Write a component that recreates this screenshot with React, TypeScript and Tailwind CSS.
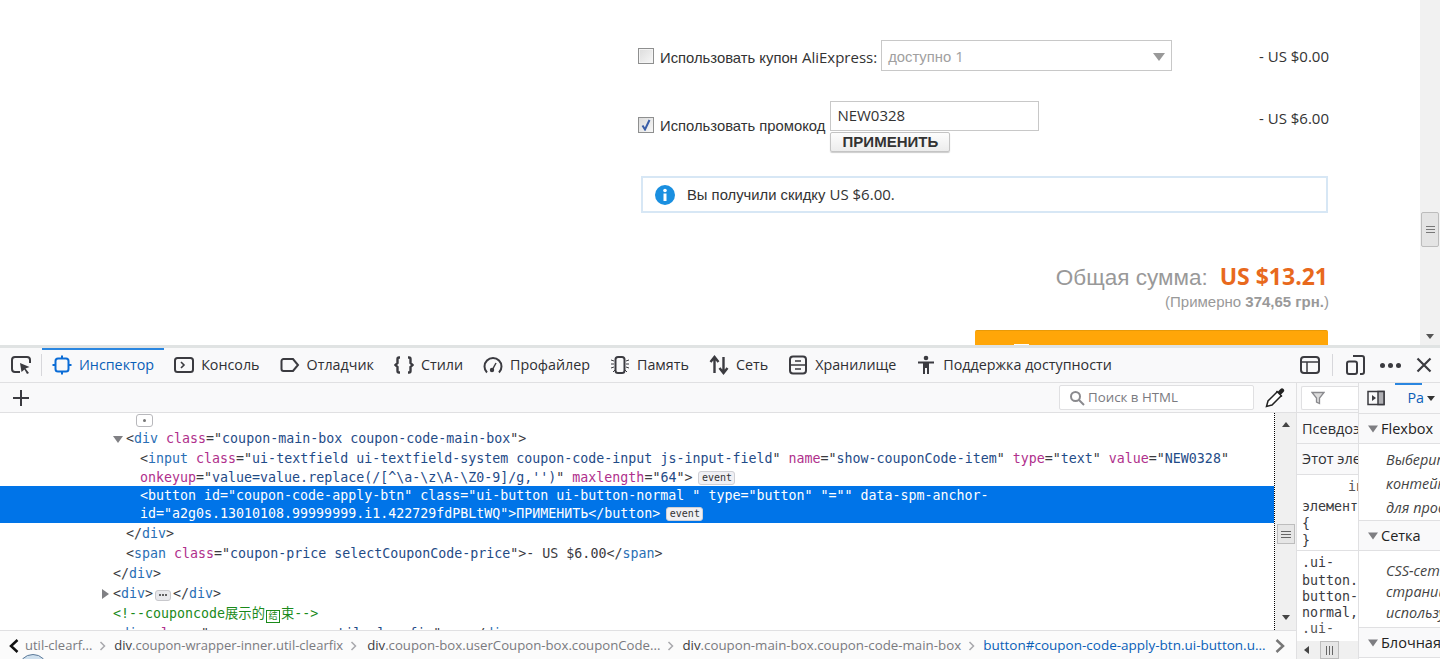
import React from "react";

const Tag = ({ c }: { c: string }) => <span className="text-[#2a6fb5]">{c}</span>;
const An = ({ c }: { c: string }) => <span className="text-[#b0308c]">{c}</span>;
const Val = ({ c }: { c: string }) => <span className="text-[#1f4b87]">{c}</span>;
const Lat = ({ children }: { children: React.ReactNode }) => (
  <span className="font-['Open_Sans',sans-serif] text-[15px]">{children}</span>
);
const Attr = ({ n, v }: { n: string; v: string }) => (
  <>
    {" "}
    <An c={n} />
    ="<Val c={v} />"
  </>
);
const EventBadge = () => (
  <span className="ml-[6px] inline-flex h-[14px] w-[37px] items-center justify-center rounded-[3px] border border-[#cfcfd4] bg-[#f0f0f4] align-[1px] text-[10px] leading-none text-[#333]">
    event
  </span>
);
const Dots = () => (
  <span className="mx-[2px] inline-flex h-[11px] w-[16px] items-center justify-center gap-[1px] rounded-[3px] border border-[#c8c8cc] bg-[#e8e8ec] align-[2px]">
    <i className="h-[2px] w-[2px] rounded-full bg-[#333]" />
    <i className="h-[2px] w-[2px] rounded-full bg-[#333]" />
    <i className="h-[2px] w-[2px] rounded-full bg-[#333]" />
  </span>
);

const ic = "shrink-0 fill-none stroke-[#3b3b40] stroke-[2]";

const tabs: { label: string; icon: React.ReactNode; active?: boolean }[] = [
  {
    label: "Инспектор",
    active: true,
    icon: (
      <svg width="20" height="20" viewBox="0 0 20 20" className="shrink-0 fill-none stroke-[#0a6cd6] stroke-[2]">
        <rect x="3.500" y="3.500" width="13" height="13" rx="2.500" />
        <path d="M10 0.500V3.500M10 16.500V19.500M0.500 10H3.500M16.500 10H19.500" />
      </svg>
    ),
  },
  {
    label: "Консоль",
    icon: (
      <svg width="20" height="20" viewBox="0 0 20 20" className={ic}>
        <rect x="1" y="3" width="18" height="14" rx="2.500" />
        <path d="M7 7l3 3-3 3" strokeWidth="1.600" />
      </svg>
    ),
  },
  {
    label: "Отладчик",
    icon: (
      <svg width="20" height="20" viewBox="0 0 20 20" className={ic}>
        <path d="M3.500 4H13l5 6-5 6H3.500A2 2 0 0 1 1.500 14V6a2 2 0 0 1 2-2z" />
      </svg>
    ),
  },
  {
    label: "Стили",
    icon: (
      <svg width="20" height="20" viewBox="0 0 20 20" className="shrink-0 fill-none stroke-[#3b3b40] stroke-[2.400]">
        <path d="M6 2.500H5a1.500 1.500 0 0 0-1.500 1.500v4L1.500 10l2 2v4A1.500 1.500 0 0 0 5 17.500h1M14 2.500h1A1.500 1.500 0 0 1 16.500 4v4l2 2-2 2v4a1.500 1.500 0 0 1-1.500 1.500h-1" />
      </svg>
    ),
  },
  {
    label: "Профайлер",
    icon: (
      <svg width="20" height="20" viewBox="0 0 20 20" className={ic}>
        <path d="M4 17.500A8.500 8.500 0 1 1 16 17.500" />
        <circle cx="9" cy="15" r="2.200" fill="#3b3b40" stroke="none" />
        <path d="M9.500 14.500L13 8" strokeWidth="1.500" />
      </svg>
    ),
  },
  {
    label: "Память",
    icon: (
      <svg width="20" height="20" viewBox="0 0 20 20" className={ic}>
        <rect x="5.500" y="2" width="9" height="16" rx="2.500" />
        <path d="M1 5l3 1M1 9h3M1 13l3-1M3 17l2-2M19 5l-3 1M19 9h-3M19 13l-3-1M17 17l-2-2" strokeWidth="1" />
      </svg>
    ),
  },
  {
    label: "Сеть",
    icon: (
      <svg width="20" height="20" viewBox="0 0 20 20" className={ic}>
        <path d="M5.500 18V2M1.500 7l4-5 4 5M14.500 2v16M10.500 13l4 5 4-5" strokeWidth="2.400" />
      </svg>
    ),
  },
  {
    label: "Хранилище",
    icon: (
      <svg width="20" height="20" viewBox="0 0 20 20" className={ic}>
        <rect x="2" y="1.500" width="16" height="17" rx="3" />
        <path d="M2 10h16M7 6h6M7 14h6" strokeWidth="1.700" />
      </svg>
    ),
  },
  {
    label: "Поддержка доступности",
    icon: (
      <svg width="20" height="20" viewBox="0 0 20 20" className="shrink-0 fill-[#3b3b40]">
        <circle cx="10" cy="3" r="2.300" />
        <path d="M2 6.500h16v2h-5v10.500h-2v-6h-2v6H7V8.500H2z" />
      </svg>
    ),
  },
];

const Tab = ({ t }: { t: (typeof tabs)[number] }) => (
  <div
    className={
      "relative flex h-full items-center gap-[7px] px-[10px] " +
      (t.active ? "text-[#0a5fb8]" : "text-[#2f2f33]")
    }
  >
    {t.active && <span className="absolute inset-x-0 top-0 h-[2px] bg-[#2a86e0]" />}
    {t.icon}
    <span>{t.label}</span>
  </div>
);

const Crumb = ({ a, b, blue, s }: { a: string; b: string; blue?: boolean; s?: string }) => (
  <span className={"whitespace-nowrap " + (blue ? "text-[#0a5fb8] " : "text-[#3a3a3e] ") + (s ?? "")}>
    {a}
    <span className={blue ? "text-[#0a5fb8]" : "text-[#7a7a7f]"}>{b}</span>
  </span>
);
const Sep = () => (
  <svg width="8" height="10" viewBox="0 0 8 10" className="mx-[7px] shrink-0 fill-none stroke-[#a8a8ac] stroke-[1.500]">
    <path d="M1.500 1l4 4-4 4" />
  </svg>
);

const Tri = () => (
  <svg width="12" height="8" viewBox="0 0 12 8" className="shrink-0 fill-[#7e7e82]">
    <path d="M1 0.500h10L6 7.500z" />
  </svg>
);

const SideHead = ({ label, h }: { label: string; h: string }) => (
  <div className={"flex items-center gap-[2px] border-y border-[#e0e0e2] bg-[#f9f9fa] pl-[8px] text-[14.500px] text-[#222] " + h}>
    <Tri />
    <span className="whitespace-nowrap">{label}</span>
  </div>
);

export default function App() {
  return (
    <div className="relative flex h-[659px] w-[1440px] flex-col overflow-hidden bg-white font-['Open_Sans','Noto_Sans_CJK_SC',sans-serif]">
      {/* page */}
      <div className="flex h-[345px] shrink-0 overflow-hidden">
        <div className="flex-1 pl-[638px] pr-[91px] pt-[40px] font-['Liberation_Sans',sans-serif] text-[14.800px] text-[#333]">
          <div className="flex h-[31px] items-center">
            <span className="h-[16px] w-[16px] shrink-0 border border-[#8e8f8f] bg-gradient-to-br from-[#dcdcdc] to-[#f7f7f7] ring-1 ring-inset ring-[#f4f4f4]" />
            <span className="ml-[6px] whitespace-nowrap pt-[4px]">
              Использовать купон <Lat>AliExpress:</Lat>
            </span>
            <div className="ml-[4px] flex h-[31px] w-[291px] items-center justify-between border border-[#c8c8c8] px-[6px] pt-[2px] text-[#a0a0a0]">
              <span>доступно <Lat>1</Lat></span>
              <span className="h-0 w-0 border-x-[6px] border-t-[8px] border-x-transparent border-t-[#999]" />
            </div>
            <span className="ml-auto whitespace-nowrap pt-[3px]"><Lat>- US $0.00</Lat></span>
          </div>

          <div className="mt-[30px] flex h-[51px] items-start">
            <span className="mt-[16px] flex h-[16px] w-[16px] shrink-0 items-center justify-center border border-[#8e8f8f] bg-gradient-to-br from-[#dcdcdc] to-[#f7f7f7]">
              <svg width="10" height="12" viewBox="0 0 10 12" className="fill-none stroke-[#3a5ea8] stroke-[2]">
                <path d="M1.500 6.500L4 10.500 8.500 1" />
              </svg>
            </span>
            <span className="ml-[6px] mt-[14px] whitespace-nowrap">Использовать промокод</span>
            <div className="ml-[5px] flex flex-col items-start">
              <div className="flex h-[30px] w-[209px] items-center border border-[#c8c8c8] pb-[2px] pl-[6px] text-[#333]"><Lat>NEW0328</Lat></div>
              <div className="mt-[1px] flex h-[20px] w-[120px] items-center justify-center rounded-[2px] border border-[#c4c4c4] bg-gradient-to-b from-[#fdfdfd] to-[#ececec] text-[15px] font-bold text-[#333] shadow-[0_1px_1px_rgba(0,0,0,0.2)]">
                ПРИМЕНИТЬ
              </div>
            </div>
            <span className="ml-auto mt-[6px] whitespace-nowrap"><Lat>- US $6.00</Lat></span>
          </div>

          <div className="ml-[3px] mr-[1px] mt-[24px] flex h-[37px] items-center border-2 border-[#d7e7f5] pl-[12px]">
            <svg width="20" height="20" viewBox="0 0 20 20" className="shrink-0">
              <circle cx="10" cy="10" r="10" fill="#1a8fe0" />
              <rect x="8.500" y="8.500" width="3" height="7.500" fill="#fff" />
              <circle cx="10" cy="5.500" r="1.800" fill="#fff" />
            </svg>
            <span className="ml-[12px] whitespace-nowrap">Вы получили скидку <Lat>US $6.00.</Lat></span>
          </div>

          <div className="mr-[1px] mt-[46px] flex items-baseline justify-end text-[22.500px] leading-[34px]">
            <span className="text-[#999]">Общая сумма:</span>
            <span className="ml-[12px] font-['Open_Sans',sans-serif] text-[23px] font-bold text-[#e8691d]">US $13.21</span>
          </div>
          <div className="text-right text-[15px] leading-[14px] text-[#999]">
            (Примерно <span className="font-bold">374,65 грн.</span>)
          </div>
          <div className="ml-[337px] mr-[1px] mt-[21px] flex h-[30px] justify-center rounded-t-[2px] border-t border-[#e89a08] bg-[#ffa608] pr-[261px] pt-[13px]">
            <span className="h-[4px] w-[15px] bg-white" />
          </div>
        </div>
        <div className="flex w-[20px] shrink-0 flex-col bg-[#f1f1f1]">
          <div className="ml-[1px] mt-[212px] flex h-[35px] w-[18px] flex-col items-center justify-center gap-[2px] rounded-[2px] border border-[#bcbcbc] bg-[#e4e4e4]">
            <i className="h-px w-[9px] bg-[#777]" />
            <i className="h-px w-[9px] bg-[#777]" />
            <i className="h-px w-[9px] bg-[#777]" />
          </div>
          <div className="mx-auto mt-[87px] h-0 w-0 border-x-[4px] border-t-[5px] border-x-transparent border-t-[#555]" />
        </div>
      </div>

      {/* devtools */}
      <div className="flex min-h-0 flex-1 flex-col border-t-[3px] border-[#e0e3e3] bg-[#f9f9fa] text-[14.300px] text-[#2f2f33]">
        <div className="flex h-[35px] shrink-0 items-center border-b border-[#e0e0e2]">
          <div className="flex h-full w-[41px] shrink-0 items-center justify-center">
            <svg width="20" height="20" viewBox="0 0 20 20" className="fill-none stroke-[#3b3b40] stroke-[2]">
              <path d="M9 17H4a3 3 0 0 1-3-3V5a3 3 0 0 1 3-3h12a3 3 0 0 1 3 3v3" />
              <path d="M9 8l9.500 4-4 1.500 3.500 4.500-2 1-2.500-4.500-3 2.500z" fill="#3b3b40" stroke="none" />
            </svg>
          </div>
          <div className="h-[22px] w-px shrink-0 bg-[#d7d7db]" />
          <div className="flex h-full min-w-0 flex-1 items-center">
            {tabs.map((t) => (
              <Tab key={t.label} t={t} />
            ))}
          </div>
          <svg width="20" height="20" viewBox="0 0 20 20" className="mr-[12px] shrink-0 fill-none stroke-[#3b3b40] stroke-[2]">
            <rect x="1" y="2" width="18" height="16" rx="3" />
            <path d="M1 7h18M7 7v11" strokeWidth="1.500" />
          </svg>
          <div className="h-[22px] w-px shrink-0 bg-[#d7d7db]" />
          <svg width="20" height="20" viewBox="0 0 20 20" className="ml-[13px] shrink-0 fill-none stroke-[#3b3b40] stroke-[2]">
            <path d="M7 1h9a2 2 0 0 1 2 2v14a2 2 0 0 1-2 2h-2" />
            <rect x="1" y="6.500" width="10" height="12.500" rx="2" />
          </svg>
          <div className="ml-[14px] flex shrink-0 gap-[3px]">
            <i className="h-[5px] w-[5px] rounded-full bg-[#3b3b40]" />
            <i className="h-[5px] w-[5px] rounded-full bg-[#3b3b40]" />
            <i className="h-[5px] w-[5px] rounded-full bg-[#3b3b40]" />
          </div>
          <svg width="16" height="16" viewBox="0 0 16 16" className="ml-[15px] mr-[8px] shrink-0 fill-none stroke-[#3b3b40] stroke-[2.200]">
            <path d="M1.500 1.500l13 13M14.500 1.500l-13 13" />
          </svg>
        </div>

        <div className="flex min-h-0 flex-1">
          {/* markup panel */}
          <div className="flex w-[1296px] shrink-0 flex-col">
            <div className="flex h-[30px] shrink-0 items-center border-b border-[#e0e0e2] pl-[12px]">
              <svg width="18" height="18" viewBox="0 0 18 18" className="shrink-0 fill-none stroke-[#3b3b40] stroke-[2]">
                <path d="M9 1v16M1 9h16" />
              </svg>
              <div className="ml-[1029px] flex h-[25px] w-[195px] shrink-0 items-center gap-[3px] rounded-[2px] border border-[#e0e0e2] bg-white pl-[9px] pt-[1px] text-[13.300px] text-[#7a7a7f]">
                <svg width="16" height="16" viewBox="0 0 16 16" className="shrink-0 fill-none stroke-[#8a8a8e] stroke-[2]">
                  <circle cx="6.500" cy="6.500" r="4.500" />
                  <path d="M10 10l5 5" />
                </svg>
                <span>Поиск в HTML</span>
              </div>
              <svg width="20" height="20" viewBox="0 0 20 20" className="ml-[11px] shrink-0">
                <path d="M12.500 3.500L3 13l-1.500 5.500L7 17l9.500-9.500" fill="#fff" stroke="#222" strokeWidth="1.500" />
                <path d="M11 3.500l5.500 5.500 1-1-1.500-1.500 2.500-2.500a2 2 0 0 0-3-3L13 3.500 12 2.500z" fill="#222" />
              </svg>
            </div>
            <div className="flex min-h-0 flex-1">
              <div className="min-w-0 flex-1 overflow-hidden border-r border-dotted border-black bg-white font-['DejaVu_Sans_Mono','Noto_Sans_CJK_SC',monospace] text-[13.300px] leading-[18px] text-[#3a3a3e]">
                <div className="ml-[136px] mt-[1px] flex h-[13px] w-[17px] items-center justify-center rounded-[3px] border border-[#b8b8bc] bg-white">
                  <i className="h-[3px] w-[3px] rounded-full bg-[#777]" />
                </div>
                <div className="relative ml-[126px] mt-[3px] h-[19px] whitespace-nowrap">
                  <span className="absolute left-[-13px] top-[6px] h-0 w-0 border-x-[5px] border-t-[7px] border-x-transparent border-t-[#808084]" />
                  &lt;<Tag c="div" />
                  <Attr n="class" v="coupon-main-box coupon-code-main-box" />
                  &gt;
                </div>
                <div className="ml-[140px] h-[37px] whitespace-nowrap leading-[19px]">
                  &lt;<Tag c="input" />
                  <Attr n="class" v="ui-textfield ui-textfield-system coupon-code-input js-input-field" />
                  <Attr n="name" v="show-couponCode-item" />
                  <Attr n="type" v="text" />
                  <Attr n="value" v="NEW0328" />
                  <br />
                  <An c="onkeyup" />
                  ="<Val c="value=value.replace(/[^\a-\z\A-\Z0-9]/g,'')" />"
                  <Attr n="maxlength" v="64" />
                  &gt;
                  <EventBadge />
                </div>
                <div className="flex h-[37px] items-center whitespace-nowrap bg-[#0074e8] pl-[140px] leading-[18px] text-white">
                  <div>
                    &lt;button id="coupon-code-apply-btn" class="ui-button ui-button-normal " type="button" "="" data-spm-anchor-
                    <br />
                    id="a2g0s.13010108.99999999.i1.422729fdPBLtWQ"&gt;ПРИМЕНИТЬ&lt;/button&gt;
                    <EventBadge />
                  </div>
                </div>
                <div className="ml-[126px] mt-[2px] h-[20px] whitespace-nowrap">
                  &lt;/<Tag c="div" />&gt;
                </div>
                <div className="ml-[126px] h-[20px] whitespace-nowrap">
                  &lt;<Tag c="span" />
                  <Attr n="class" v="coupon-price selectCouponCode-price" />
                  &gt;- US $6.00&lt;/<Tag c="span" />&gt;
                </div>
                <div className="ml-[113px] h-[20px] whitespace-nowrap">
                  &lt;/<Tag c="div" />&gt;
                </div>
                <div className="relative ml-[113px] h-[20px] whitespace-nowrap">
                  <span className="absolute left-[-11px] top-[4px] h-0 w-0 border-y-[5px] border-l-[7px] border-y-transparent border-l-[#808084]" />
                  &lt;<Tag c="div" />&gt;
                  <Dots />
                  &lt;/<Tag c="div" />&gt;
                </div>
                <div className="ml-[113px] h-[20px] whitespace-nowrap text-[#1a8a1a]">
                  &lt;!--couponcode展示的
                  <span className="mx-[1px] inline-flex h-[13px] w-[14px] items-center justify-center border border-[#1a8a1a] align-[-1px] text-[9px] leading-none">结</span>
                  束--&gt;
                </div>
                <div className="ml-[113px] h-[20px] whitespace-nowrap text-[#3a3a3e]">
                  &lt;<Tag c="div" />
                  <Attr n="class" v="coupon-wrapper util-clearfix" />
                  &gt;
                  <Dots />
                  &lt;/<Tag c="div" />&gt;
                </div>
              </div>
              <div className="flex w-[21px] shrink-0 flex-col items-center bg-[#f0f0f0]">
                <span className="mt-[9px] h-0 w-0 border-x-[4px] border-b-[5px] border-x-transparent border-b-[#444]" />
                <div className="mt-[97px] flex h-[20px] w-[18px] flex-col items-center justify-center gap-[2px] border border-[#bdbdbd] bg-[#e6e6e6]">
                  <i className="h-px w-[10px] bg-[#666]" />
                  <i className="h-px w-[10px] bg-[#666]" />
                  <i className="h-px w-[10px] bg-[#666]" />
                </div>
                <span className="mt-[71px] h-0 w-0 border-x-[4px] border-t-[5px] border-x-transparent border-t-[#444]" />
              </div>
            </div>
            <div className="flex h-[29px] shrink-0 items-center overflow-hidden border-t border-[#e0e0e2] bg-[#fbfbfb] pt-[1px] text-[13px]">
              <svg width="12" height="16" viewBox="0 0 12 16" className="ml-[8px] shrink-0 fill-none stroke-[#111] stroke-[2.500]">
                <path d="M9.500 2L3 8l6.500 6" />
              </svg>
              <span className="ml-[5px] whitespace-nowrap text-[#7a7a7f]">util-clearf...</span>
              <Sep />
              <Crumb a="div" b=".coupon-wrapper-inner.util-clearfix" />
              <Sep />
              <Crumb a="div" b=".coupon-box.userCoupon-box.couponCode..." s="ml-[2px] text-[13.200px]" />
              <Sep />
              <Crumb a="div" b=".coupon-main-box.coupon-code-main-box" s="text-[13.300px]" />
              <Sep />
              <Crumb a="button" b="#coupon-code-apply-btn.ui-button.u..." blue s="text-[13.500px]" />
              <svg width="12" height="16" viewBox="0 0 12 16" className="ml-auto mr-[10px] shrink-0 fill-none stroke-[#777] stroke-[2.500]">
                <path d="M2.500 2L9 8l-6.500 6" />
              </svg>
            </div>
          </div>

          {/* rules */}
          <div className="flex w-[62px] shrink-0 flex-col overflow-hidden border-l border-[#e0e0e2]">
            <div className="flex h-[30px] shrink-0 items-center border-b border-[#e0e0e2] pl-[4px]">
              <div className="flex h-[24px] w-full items-center rounded-l-[2px] border border-r-0 border-[#e0e0e2] bg-white pl-[9px]">
                <svg width="14" height="14" viewBox="0 0 14 14" className="fill-[#dcdcdc] stroke-[#8a8a8e] stroke-[1.300]">
                  <path d="M1 1.500h12L8.500 7v5.500l-3-1.500V7z" />
                </svg>
              </div>
            </div>
            <div className="flex h-[31px] shrink-0 items-center whitespace-nowrap border-b border-[#e0e0e2] pl-[5px] pt-[2px] text-[14.500px]">Псевдоэлементы</div>
            <div className="flex h-[31px] shrink-0 items-center whitespace-nowrap border-b border-[#e0e0e2] pl-[5px] text-[14.500px]">Этот элемент</div>
            <div className="min-h-0 flex-1 overflow-hidden bg-white pl-[5px] font-['DejaVu_Sans_Mono',monospace] text-[13.300px] leading-[17px] text-[#3a3a3e]">
              <div className="mt-[3px] h-[72px]">
                <div className="pl-[46px] text-[#555]">in</div>
                <div className="mt-[3px]">элемент</div>
                <div>{"{"}</div>
                <div>{"}"}</div>
              </div>
              <div className="-ml-[5px] border-t border-[#e0e0e2] pl-[5px] pt-[4px] leading-[16px]">
                <div>.ui-</div>
                <div className="mt-[2px]">button.</div>
                <div>button-</div>
                <div>normal,</div>
                <div className="text-[#555]">.ui-</div>
              </div>
            </div>
            <div className="flex h-[18px] shrink-0 items-center bg-[#f0f0f0]">
              <span className="ml-[7px] h-0 w-0 border-y-[4px] border-r-[5px] border-y-transparent border-r-[#444]" />
              <div className="ml-[11px] flex h-[18px] w-[19px] items-center justify-center gap-[2px] border border-[#bdbdbd] bg-[#e6e6e6]">
                <i className="h-[9px] w-px bg-[#666]" />
                <i className="h-[9px] w-px bg-[#666]" />
                <i className="h-[9px] w-px bg-[#666]" />
              </div>
            </div>
          </div>

          {/* sidebar */}
          <div className="flex min-w-0 flex-1 flex-col overflow-hidden border-l border-[#e0e0e2] bg-white">
            <div className="flex h-[30px] shrink-0 items-center bg-[#f9f9fa]">
              <svg width="18" height="16" viewBox="0 0 18 16" className="ml-[8px] shrink-0 fill-none stroke-[#3b3b40] stroke-[1.500]">
                <rect x="1" y="1.500" width="16" height="13" />
                <rect x="11" y="1.500" width="6" height="13" fill="#b0b0b4" />
                <path d="M5 5l4 3-4 3z" fill="#3b3b40" stroke="none" />
              </svg>
              <div className="relative ml-[10px] flex h-full w-[27px] shrink-0 items-center justify-end text-[#0a5fb8]">
                <span className="absolute inset-x-0 top-0 h-[2px] bg-[#2a86e0]" />
                <span className="-mr-[2px]">Ра</span>
              </div>
              <span className="ml-[5px] h-0 w-0 border-x-[4px] border-t-[5px] border-x-transparent border-t-[#333]" />
            </div>
            <SideHead label="Flexbox" h="h-[31px] shrink-0" />
            <div className="h-[76px] shrink-0 whitespace-nowrap pl-[27px] pt-[4px] text-[14.400px] italic leading-[24px] text-[#444]">
              Выберите
              <br />
              контейнер
              <br />
              для продолжения
            </div>
            <SideHead label="Сетка" h="h-[31px] shrink-0" />
            <div className="h-[76px] shrink-0 whitespace-nowrap pl-[27px] pt-[9px] text-[14.400px] italic leading-[21px] text-[#444]">
              CSS-сетка
              <br />
              страницы
              <br />
              используется
            </div>
            <SideHead label="Блочная" h="h-[31px] shrink-0" />
          </div>
        </div>
      </div>

      <div className="absolute left-[18px] top-[654px] h-[30px] w-[30px] rounded-full border border-[#5c7a99] bg-[#cfe0ee]" />
    </div>
  );
}
